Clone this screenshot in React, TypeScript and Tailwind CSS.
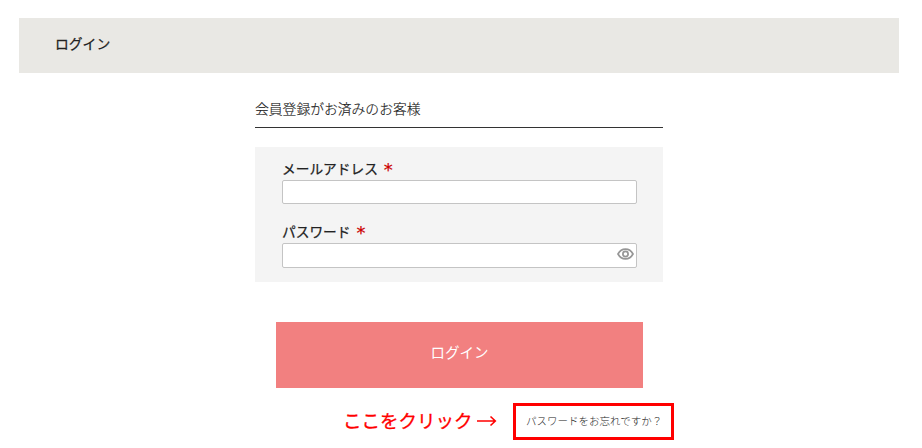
import { useState } from 'react';

interface FieldProps {
  id: string;
  label: string;
  type: string;
  className: string;
  inputClassName: string;
  children?: React.ReactNode;
}

function Field({ id, label, type, className, inputClassName, children }: FieldProps) {
  return (
    <div className={className}>
      <label htmlFor={id} className="flex h-[22px] text-[13.7px] leading-5 text-[#222] [-webkit-text-stroke:0.25px_#222]">
        {label}
        <span className="ml-[6px] font-['DejaVu_Sans'] text-[18px] leading-[24px] text-[#cc0000] [-webkit-text-stroke:0.2px_#cc0000]">*</span>
      </label>
      <div className="relative">
        <input
          type={type}
          id={id}
          className={`block w-full rounded-[2px] border border-[#c4c4c4] bg-white px-2 text-sm outline-none ${inputClassName}`}
        />
        {children}
      </div>
    </div>
  );
}

function EyeIcon() {
  return (
    <svg viewBox="0 0 17 12" className="h-3 w-[17px]" fill="none" stroke="#969696" strokeWidth="1.7">
      <path d="M1 6C2.8 2.7 5.4 1.2 8.5 1.2S14.2 2.7 16 6c-1.8 3.3-4.4 4.8-7.5 4.8S2.8 9.3 1 6Z" />
      <circle cx="8.5" cy="6" r="2.6" />
    </svg>
  );
}

export default function App() {
  const [showPassword, setShowPassword] = useState(false);

  return (
    <div className="h-[448px] overflow-hidden bg-white px-[19px] pt-[18px] font-['Noto_Sans_CJK_JP','Noto_Sans',sans-serif] text-[#222]">
      <header className="flex h-[55px] w-[880px] items-center bg-[#e9e8e4] pl-9">
        <h1 className="-mt-[5px] text-[13.8px] leading-5 [-webkit-text-stroke:0.25px_#222]">ログイン</h1>
      </header>

      <form className="ml-[236px] w-[408px]" onSubmit={(e) => e.preventDefault()}>
        <h2 className="mt-[25px] h-[30px] border-b border-[#333] text-[13.8px] leading-5 font-light [-webkit-text-stroke:0.15px_#222]">
          会員登録がお済みのお客様
        </h2>

        <div className="mt-[19px] h-[135px] bg-[#f4f4f4] pr-[26px] pl-[27px]">
          <Field
            id="email"
            label="メールアドレス"
            type="email"
            className="pt-[11px]"
            inputClassName="h-6"
          />
          <Field
            id="password"
            label="パスワード"
            type={showPassword ? 'text' : 'password'}
            className="pt-[17px]"
            inputClassName="h-[25px]"
          >
            <button
              type="button"
              aria-label="パスワードを表示"
              onClick={() => setShowPassword(!showPassword)}
              className="absolute top-[5px] right-[3px]"
            >
              <EyeIcon />
            </button>
          </Field>
        </div>

        <button
          type="submit"
          className="mt-10 ml-[21px] block h-[66px] w-[367px] bg-[#f28080] pb-[6px] text-[14.5px] text-white"
        >
          ログイン
        </button>
      </form>

      <div className="mt-[15px] ml-[324px] flex h-[37px] items-center">
        <p className="-mt-[3px] flex w-[170px] items-center text-[18.5px] leading-6 whitespace-nowrap text-[#f00] [-webkit-text-stroke:0.3px_#f00]">
          ここをクリック
          <svg viewBox="0 0 20 12" className="mt-[2px] ml-1 h-3 w-5" fill="none" stroke="currentColor" strokeWidth="1.6">
            <path d="M0 6h18M13.5 1.5 18.3 6l-4.8 4.5" />
          </svg>
        </p>
        <div className="flex h-[37px] w-[161px] items-center border-3 border-[#f00] pb-[2px] pl-[10px]">
          <a href="#" className="text-[10.5px] leading-4 font-light whitespace-nowrap text-[#222]">
            パスワードをお忘れですか？
          </a>
        </div>
      </div>
    </div>
  );
}
